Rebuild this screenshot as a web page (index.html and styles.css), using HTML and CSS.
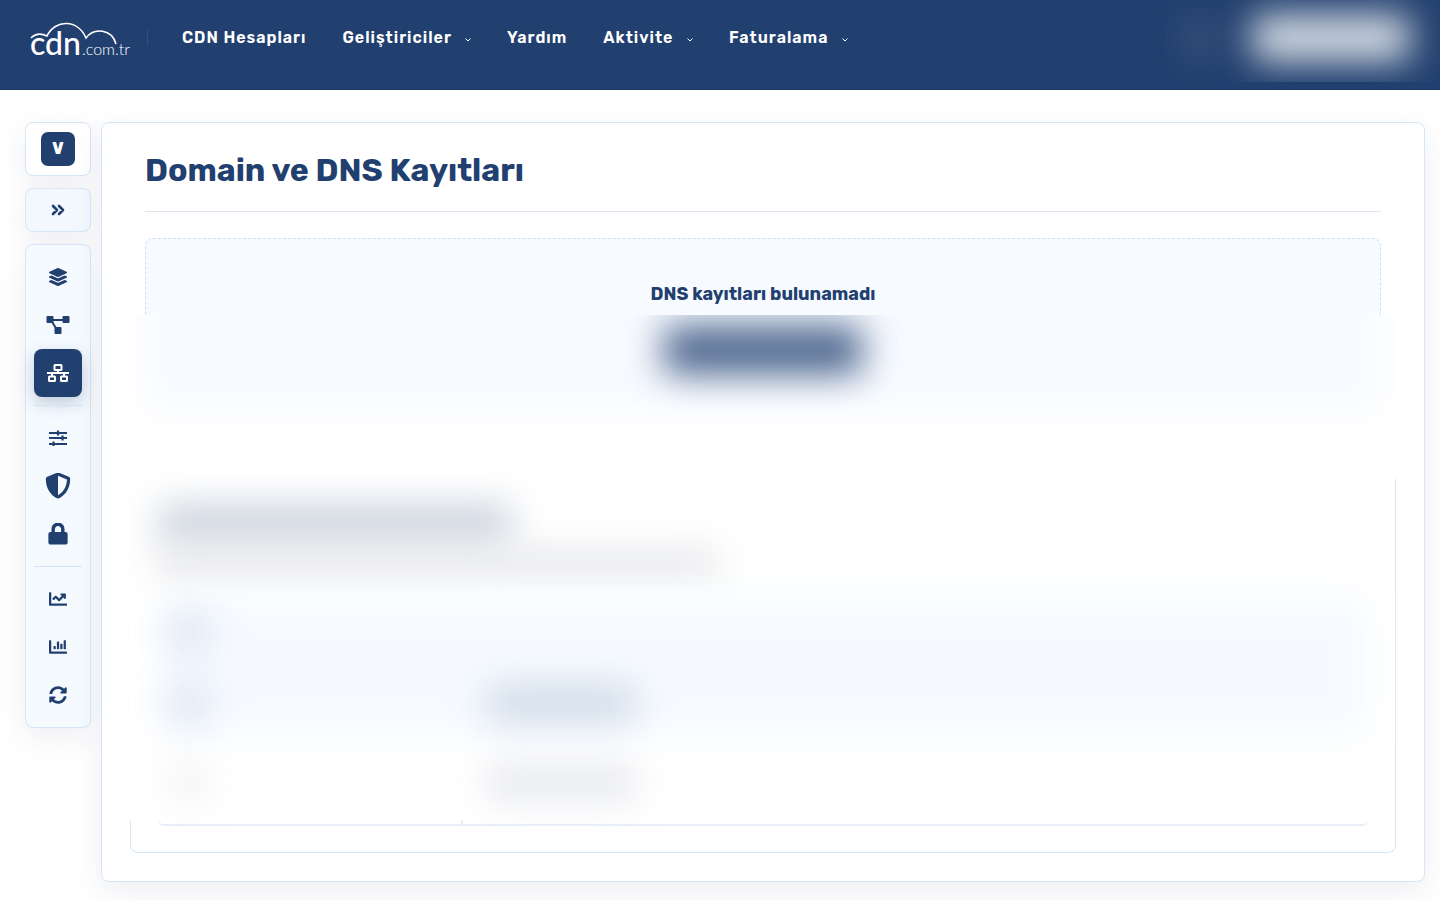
FILE: index.html
```html
<!DOCTYPE html>
<html lang="tr">
  <head>
    <meta charset="utf-8">
    <title>Domain ve DNS Kayıtları</title>
    <link rel="stylesheet" href="styles.css">
  </head>
  <body>
    <header class="header">
      <a class="logo" href="#" aria-label="cdn.com.tr">
        <svg width="102" height="44" viewBox="0 0 102 44">
          <path d="M1 16 C5 12 11 11 17 14 C25 -3 48 -3 56 16 C64 5 82 7 86 22" fill="none" stroke="#fff" stroke-width="1.6"/>
          <text class="logo-cdn" x="0" y="33">cdn</text>
          <text class="logo-tld" x="52" y="33">.com.tr</text>
        </svg>
      </a>
      <nav class="nav">
        <a href="#">CDN Hesapları</a>
        <a href="#">Geliştiriciler <svg class="caret" viewBox="0 0 6 4"><path d="M.5 .5 3 3 5.500 .5"/></svg></a>
        <a href="#">Yardım</a>
        <a href="#">Aktivite <svg class="caret" viewBox="0 0 6 4"><path d="M.5 .5 3 3 5.500 .5"/></svg></a>
        <a href="#">Faturalama <svg class="caret" viewBox="0 0 6 4"><path d="M.5 .5 3 3 5.500 .5"/></svg></a>
      </nav>
      <div class="account">
        <div class="smudge account-link"></div>
        <div class="smudge account-button"></div>
      </div>
    </header>

    <div class="page">
      <aside class="sidebar">
        <div class="box badge-box"><span class="badge">V</span></div>
        <button class="box toggle" aria-label="Menüyü aç">
          <svg width="14" height="12" viewBox="0 0 14 12" fill="none" stroke="currentColor" stroke-width="2.600" stroke-linecap="round" stroke-linejoin="round"><path d="M2 2l4 4-4 4M8 2l4 4-4 4"/></svg>
        </button>
        <nav class="box menu">
          <a href="#" aria-label="Genel">
            <svg width="18" height="18" viewBox="0 0 512 512"><path d="M12.400 148l232.900 105.700c6.800 3.100 14.500 3.100 21.300 0L499.600 148c16.500-7.500 16.500-32.500 0-40L266.600 2.300a25.600 25.600 0 0 0-21.300 0L12.400 108c-16.500 7.500-16.500 32.500 0 40zm487.200 88.300l-58.100-26.300-161.600 73.300c-7.600 3.400-15.600 5.200-23.900 5.200s-16.300-1.700-23.900-5.200L70.500 210l-58.100 26.300c-16.500 7.500-16.500 32.500 0 40l232.900 105.600c6.800 3.100 14.500 3.100 21.300 0L499.600 276.300c16.500-7.500 16.500-32.500 0-40zm0 127.800l-57.900-26.200-161.900 73.400c-7.600 3.400-15.600 5.200-23.900 5.200s-16.300-1.700-23.900-5.200L70.300 337.900l-57.900 26.200c-16.500 7.500-16.500 32.500 0 40l232.900 105.600c6.800 3.100 14.500 3.100 21.300 0l233-105.600c16.500-7.500 16.500-32.500 0-40z"/></svg>
          </a>
          <a href="#" aria-label="Kaynaklar">
            <svg width="24" height="20" viewBox="0 0 24 20"><path d="M6 5h11M5.500 6l5 8" stroke="currentColor" stroke-width="2"/><rect x=".5" y="1" width="7" height="7" rx="1"/><rect x="16.500" y="1" width="7" height="7" rx="1"/><rect x="8.500" y="12" width="7" height="7" rx="1"/></svg>
          </a>
          <a class="active" href="#" aria-label="DNS">
            <svg width="24" height="20" viewBox="0 0 24 20" fill="none" stroke="currentColor" stroke-width="2"><path d="M1 10h22M12 7v3M6 10v3M18 10v3"/><rect x="8.500" y="2" width="7" height="5" rx=".5"/><rect x="3" y="13.500" width="6" height="4.500" rx=".5"/><rect x="15" y="13.500" width="6" height="4.500" rx=".5"/></svg>
          </a>
          <hr>
          <a href="#" aria-label="Ayarlar">
            <svg width="18" height="16" viewBox="0 0 18 16" stroke="currentColor" stroke-width="2.200" fill="none"><path d="M0 3h18M0 8h18M0 14h18M9 .5v5M13.500 5.500v5M4.500 11.500v4.500"/></svg>
          </a>
          <a href="#" aria-label="Güvenlik">
            <svg width="26" height="26" viewBox="0 10 512 512"><path d="M466.500 83.700l-192-80a48.200 48.200 0 0 0-36.900 0l-192 80C27.700 91.100 16 108.600 16 128c0 198.500 114.500 335.700 221.500 380.300 11.800 4.900 25.100 4.900 36.900 0C360.100 472.600 496 349.300 496 128c0-19.400-11.700-36.900-29.500-44.300zM256.100 446.300l-.1-381 175.900 73.300c-3.300 151.400-82.100 261.100-175.800 307.700z"/></svg>
          </a>
          <a href="#" aria-label="SSL">
            <svg width="20" height="22" viewBox="0 12 448 512"><path d="M400 224h-24v-72C376 68.200 307.800 0 224 0S72 68.200 72 152v72H48c-26.500 0-48 21.500-48 48v192c0 26.500 21.500 48 48 48h352c26.500 0 48-21.500 48-48V272c0-26.500-21.500-48-48-48zm-104 0H152v-72c0-39.700 32.300-72 72-72s72 32.300 72 72v72z"/></svg>
          </a>
          <hr>
          <a href="#" aria-label="Analiz">
            <svg width="18" height="18" viewBox="0 0 512 512"><path d="M496 384H64V80c0-8.800-7.200-16-16-16H16C7.200 64 0 71.200 0 80v336c0 17.700 14.300 32 32 32h464c8.800 0 16-7.200 16-16v-32c0-8.800-7.200-16-16-16zM464 96H345.900c-21.400 0-32.100 25.900-17 41l32.400 32.400L288 242.800l-73.400-73.400c-12.500-12.500-32.800-12.500-45.300 0l-68.700 68.700c-6.200 6.200-6.200 16.400 0 22.600l22.600 22.600c6.200 6.200 16.400 6.200 22.600 0L192 237.300l73.400 73.400c12.500 12.500 32.800 12.500 45.300 0l96-96 32.400 32.400c15.100 15.100 41 4.400 41-17V112c-.1-8.800-7.200-16-16.100-16z"/></svg>
          </a>
          <a href="#" aria-label="Raporlar">
            <svg width="18" height="18" viewBox="0 0 512 512"><path d="M332.800 320h38.400c6.400 0 12.800-6.400 12.800-12.800V172.800c0-6.400-6.400-12.800-12.800-12.800h-38.400c-6.400 0-12.800 6.400-12.800 12.800v134.400c0 6.400 6.400 12.800 12.800 12.800zm96 0h38.400c6.400 0 12.800-6.400 12.800-12.800V76.800c0-6.400-6.400-12.800-12.800-12.800h-38.400c-6.400 0-12.800 6.400-12.800 12.800v230.400c0 6.400 6.400 12.800 12.800 12.800zm-288 0h38.400c6.400 0 12.800-6.400 12.800-12.800v-70.400c0-6.400-6.400-12.800-12.800-12.800h-38.400c-6.400 0-12.800 6.400-12.800 12.800v70.400c0 6.400 6.400 12.800 12.800 12.800zm96 0h38.400c6.400 0 12.800-6.400 12.800-12.800V108.800c0-6.400-6.400-12.800-12.800-12.800h-38.400c-6.400 0-12.800 6.400-12.800 12.800v198.400c0 6.400 6.400 12.800 12.800 12.800zM496 384H64V80c0-8.800-7.200-16-16-16H16C7.200 64 0 71.200 0 80v336c0 17.700 14.300 32 32 32h464c8.800 0 16-7.200 16-16v-32c0-8.800-7.200-16-16-16z"/></svg>
          </a>
          <a href="#" aria-label="Önbellek temizle">
            <svg width="18" height="18" viewBox="0 0 512 512"><path d="M370.700 133.300C339.500 104 298.900 88 255.800 88c-77.500.1-144.300 53.200-162.800 126.900-1.300 5.400-6.100 9.100-11.700 9.100H24.100c-7.500 0-13.200-6.800-11.800-14.200C33.900 94.900 134.800 8 256 8c66.400 0 126.800 26.100 171.300 68.700L463 41C478.100 25.900 504 36.600 504 57.900V192c0 13.300-10.700 24-24 24H345.900c-21.400 0-32.100-25.900-17-41l41.800-41.700zM32 296h134.100c21.400 0 32.100 25.900 17 41l-41.800 41.800c31.300 29.300 71.800 45.300 114.900 45.200 77.400-.1 144.300-53.100 162.800-126.800 1.300-5.400 6.100-9.100 11.700-9.100h57.300c7.500 0 13.200 6.800 11.800 14.200C478.100 417.100 377.200 504 256 504c-66.400 0-126.800-26.100-171.300-68.700L49 471c-15.100 15.100-41 4.400-41-17V320c0-13.300 10.700-24 24-24z"/></svg>
          </a>
        </nav>
      </aside>

      <main class="panel">
        <h1 class="title">Domain ve DNS Kayıtları</h1>
        <div class="empty">DNS kayıtları bulunamadı</div>
        <div class="empty-action">
          <div class="smudge empty-glow"></div>
          <div class="smudge empty-button"></div>
        </div>
        <section class="card">
          <div class="veil">
            <div class="smudge veil-title"></div>
            <div class="smudge veil-text"></div>
            <div class="veil-rows">
              <div class="smudge veil-tint"></div>
              <div class="smudge chip"></div>
              <div></div>
              <div class="smudge chip"></div>
              <div class="smudge chip wide"></div>
              <div class="smudge chip light"></div>
              <div class="smudge chip wide light"></div>
            </div>
          </div>
          <div class="card-end">
            <div class="rows-end"><div class="cell-end"></div></div>
          </div>
        </section>
      </main>
    </div>
  </body>
</html>
```
FILE: styles.css
```css
* {
  box-sizing: border-box;
}
body {
  margin: 0;
  background-color: #fff;
  color: #22406f;
  font-family: Rubik, Roboto, Arial, sans-serif;
}
a {
  color: inherit;
  text-decoration: none;
}
.smudge {
  filter: blur(18px);
}

/* header */
.header {
  display: flex;
  height: 90px;
  padding-left: 30px;
  background-color: #22406f;
  border-bottom: 1px solid #1e3869;
  color: #fff;
}
.logo {
  height: 16px;
  margin-top: 30px;
  padding-right: 15px;
  border-right: 1px solid #34507c;
}
.logo svg {
  display: block;
  margin-top: -8px;
  overflow: visible;
}
.logo text {
  fill: #fff;
  font-family: Lato, sans-serif;
}
.logo .logo-cdn {
  font-size: 32px;
  font-weight: 500;
}
.logo .logo-tld {
  font-size: 16px;
  font-weight: 300;
}
.nav {
  display: flex;
  gap: 36px;
  margin-left: 34px;
  padding-top: 28px;
  font-size: 16px;
  line-height: 20px;
  font-weight: 600;
  letter-spacing: 1px;
  white-space: nowrap;
}
.caret {
  width: 6px;
  height: 4px;
  margin: 0 0 1px 9px;
  fill: none;
  stroke: #fff;
}
.account {
  display: flex;
  align-items: center;
  gap: 42px;
  height: 82px;
  margin-left: auto;
  padding: 0 30px 6px 25px;
  overflow: hidden;
}
.account-link {
  width: 20px;
  height: 30px;
  background-color: #50658a;
}
.account-button {
  width: 158px;
  height: 46px;
  border-radius: 8px;
  background-color: #d9dfe7;
}

/* layout */
.page {
  display: flex;
  align-items: flex-start;
  gap: 10px;
  padding: 32px 15px 18px 25px;
}
.sidebar {
  display: flex;
  flex-direction: column;
  gap: 12px;
  width: 66px;
}
.box,
.panel {
  border: 1px solid #d5e6f6;
  border-radius: 8px;
  box-shadow: 0 10px 30px rgba(34, 50, 100, 0.08);
}
.box {
  background-color: #f5faff;
}
.badge-box {
  display: flex;
  justify-content: center;
  padding: 9px 0;
  background-color: #fff;
}
.badge {
  width: 34px;
  border-radius: 7px;
  background-color: #22406f;
  color: #fff;
  font-size: 16px;
  line-height: 34px;
  font-weight: 800;
  text-align: center;
}
.toggle {
  display: flex;
  align-items: center;
  justify-content: center;
  height: 44px;
  padding: 0;
  background-color: #f3f8ff;
  color: #22406f;
}
.menu {
  padding: 8px;
}
.menu a {
  display: flex;
  align-items: center;
  justify-content: center;
  height: 48px;
  border-radius: 8px;
}
.menu svg {
  fill: currentColor;
}
.menu svg[fill="none"] {
  fill: none;
}
.menu .active {
  background-color: #22406f;
  color: #fff;
  box-shadow: 0 6px 16px rgba(34, 64, 111, 0.25);
}
.menu hr {
  margin: 8px 0;
  border: 0;
  border-top: 1px solid #d3e2f0;
}

/* panel */
.panel {
  flex: 1;
  min-width: 0;
  padding: 24px 28px 28px;
  background-color: #fff;
}
.title {
  margin: 0 15px 26px;
  padding-bottom: 18px;
  border-bottom: 1px solid #dde7f2;
  font-size: 32px;
  line-height: 46px;
  font-weight: 700;
}
.empty {
  height: 77px;
  margin: 0 15px;
  padding-top: 43px;
  border: 1px dashed #cfe2f4;
  border-bottom: 0;
  border-radius: 8px 8px 0 0;
  background-color: #f7faff;
  font-size: 18px;
  line-height: 24px;
  font-weight: 700;
  text-align: center;
}
.empty-action {
  display: grid;
  justify-items: center;
  height: 164px;
  overflow: hidden;
}
.empty-action div {
  grid-area: 1 / 1;
}
.empty-glow {
  width: calc(100% - 30px);
  height: 130px;
  margin-top: -36px;
  background-color: #f7faff;
}
.empty-button {
  width: 198px;
  height: 48px;
  margin-top: 11px;
  border-radius: 8px;
  background-color: #4a648c;
}

/* card */
.veil {
  height: 341px;
  padding: 25px 27px 0 28px;
  border-right: 1px solid #dde8f3;
}
.veil-title {
  width: 354px;
  height: 38px;
  border-radius: 8px;
  background-color: #ccd2dd;
}
.veil-text {
  width: 560px;
  height: 22px;
  margin-top: 10px;
  background-color: #dee0e4;
}
.veil-rows {
  position: relative;
  display: grid;
  grid-template-columns: 304px 1fr;
  grid-template-rows: 76px 66px 92px;
  align-items: center;
  margin-top: 20px;
}
.veil-tint {
  position: absolute;
  inset: 4px 0 93px;
  background-color: #f6faff;
}
.chip {
  width: 36px;
  height: 36px;
  margin-left: 14px;
  background-color: #dae2f0;
}
.chip.wide {
  width: 150px;
  margin-left: 24px;
  background-color: #cfdae8;
}
.chip.light {
  background-color: #f0f1f3;
}
.chip.wide.light {
  background-color: #e7e9ee;
}
.card-end {
  height: 33px;
  padding: 0 27px;
  border: 1px solid #d9e7f5;
  border-top: 0;
  border-radius: 0 0 8px 8px;
}
.rows-end {
  height: 6px;
  border-bottom: 2px solid #e9eefa;
  border-radius: 0 0 6px 6px;
}
.cell-end {
  width: 305px;
  height: 4px;
  border-right: 2px solid #ecebfa;
}
```
